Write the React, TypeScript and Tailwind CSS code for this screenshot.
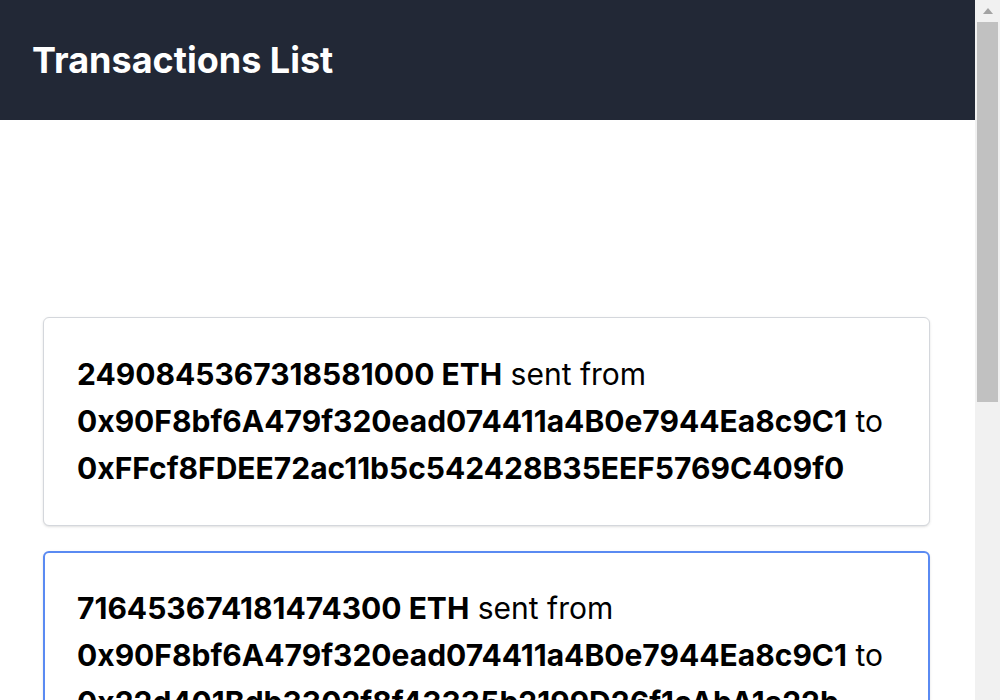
import React from 'react'

type Tx = { amount: string; from: string; to: string }

const txs: Tx[] = [
  { amount: '2490845367318581000', from: '0x90F8bf6A479f320ead074411a4B0e7944Ea8c9C1', to: '0xFFcf8FDEE72ac11b5c542428B35EEF5769C409f0' },
  { amount: '716453674181474300', from: '0x90F8bf6A479f320ead074411a4B0e7944Ea8c9C1', to: '0x22d401Bdb3302f8f43335b2199D26f1cAbA1a22b' },
  { amount: '1534876201947362800', from: '0xFFcf8FDEE72ac11b5c542428B35EEF5769C409f0', to: '0xE11BA2b4D45Eaed5996Cd0823791E0C93114882d' },
  { amount: '98341276530041200', from: '0x22d401Bdb3302f8f43335b2199D26f1cAbA1a22b', to: '0x90F8bf6A479f320ead074411a4B0e7944Ea8c9C1' },
]

// fake classic scrollbar, the reference was taken with one showing
const Scrollbar = () => (
  <div className="fixed right-0 top-0 h-screen w-[25px] bg-[#f1f1f1]">
    <div className="flex h-[22px] items-center justify-center">
      <svg width="12" height="8" viewBox="0 0 12 8">
        <path d="M6 1 L11 7 L1 7 Z" fill="#a3a3a3" />
      </svg>
    </div>
    <div className="ml-[2px] mr-[2px] h-[380px] bg-[#c1c1c1]" />
  </div>
)

export default function App() {
  return (
    <div className="min-h-screen bg-white text-black" style={{ fontFamily: 'Inter, "Noto Sans", sans-serif' }}>
      <div className="w-[975px]">
        <header className="h-[120px] bg-[#222836] flex items-center px-8">
          <h1 className="text-[36px] font-bold text-white">Transactions List</h1>
        </header>
        <main className="pl-[43px] pr-[45px] pt-[197px] flex flex-col gap-[25px]">
          {txs.map((t, i) => (
            <div
              key={i}
              className={`rounded-md bg-white text-[30px] leading-[47px] shadow-sm ${i === 1 ? 'border-2 border-[#5a8af2] p-[32px]' : 'border border-[#d4d7dc] p-[33px]'}`}
            >
              <span className="font-bold">{t.amount} ETH</span> sent from{' '}
              <span className="font-bold">{t.from}</span> to{' '}
              <span className="font-bold">{t.to}</span>
            </div>
          ))}
        </main>
      </div>
      <Scrollbar />
    </div>
  )
}
